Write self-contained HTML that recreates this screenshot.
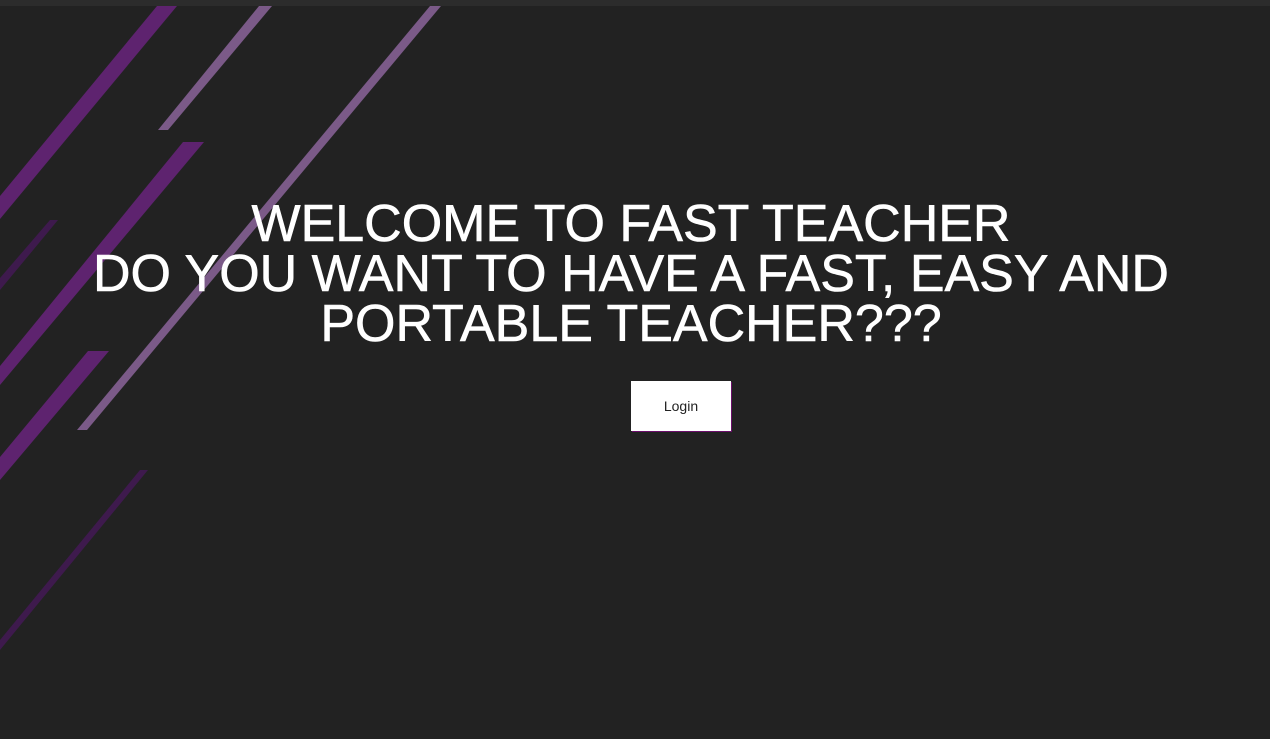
<!DOCTYPE html>
<html><head><style>
html,body{margin:0;padding:0;width:1270px;height:739px;overflow:hidden;background:#222222;}
.bar{position:absolute;left:0;top:0;width:1270px;height:6px;background:#2c2c2c;}
svg{position:absolute;left:0;top:0;}
h1{position:absolute;left:0;top:199px;width:1262px;margin:0;text-align:center;color:#fff;font-family:"Liberation Sans",sans-serif;font-weight:normal;font-size:52px;line-height:50px;letter-spacing:0;-webkit-text-stroke:0.6px #fff;}
.btn{position:absolute;left:631px;top:381px;width:100px;height:50px;background:#fff;box-shadow:1px 1px 0 #6a0e6a;font-family:"Liberation Sans",sans-serif;font-size:14px;color:#222;text-align:center;line-height:50px;}
</style></head><body>
<div class="bar"></div>
<svg width="1270" height="739">
<polygon points="157,6 177,6 0,219 0,196" fill="#5e236f"/>
<polygon points="259,6 272,6 168,130 158,130" fill="#7b5a88"/>
<polygon points="183,142 204,142 0,385 0,366" fill="#5e236f"/>
<polygon points="430,6 441,6 87,430 77,430" fill="#7b5a88"/>
<polygon points="50,220 58,220 0,290 0,278" fill="#3e1a4d"/>
<polygon points="88,351 109,351 0,480 0,457" fill="#5e236f"/>
<polygon points="140,470 148,470 0,650 0,640" fill="#3e1a4d"/>
</svg>
<h1>WELCOME TO FAST TEACHER<br>DO YOU WANT TO HAVE A FAST, EASY AND<br>PORTABLE TEACHER???</h1>
<div class="btn">Login</div>
</body></html>
